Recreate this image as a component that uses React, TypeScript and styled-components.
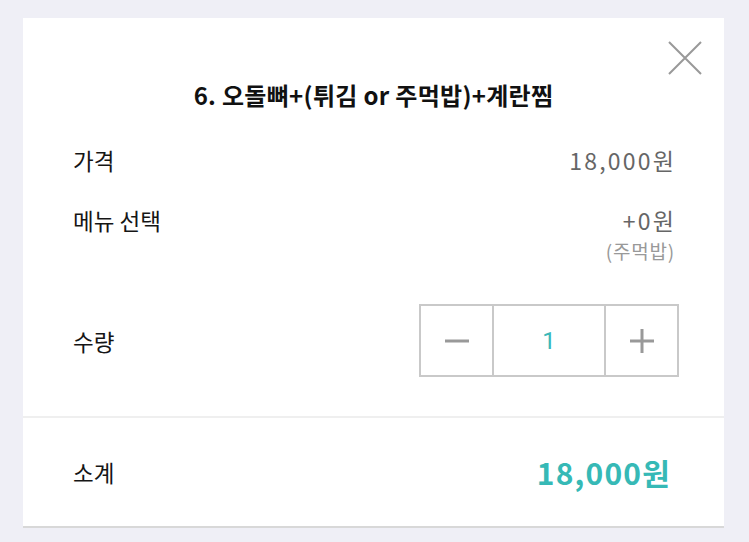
import React from "react";
import styled, { createGlobalStyle } from "styled-components";

const Global = createGlobalStyle`
  html, body { margin: 0; padding: 0; background: #efeff6; }
  body { font-family: "Noto Sans CJK KR", "Noto Sans", sans-serif; }
  * { box-sizing: border-box; }
`;

const Page = styled.div`
  width: 749px;
  height: 542px;
  padding: 18px 25px 0 23px;
  background: #efeff6;
`;

const Card = styled.div`
  position: relative;
  width: 701px;
  background: #fff;
  border-bottom: 2px solid #d8d8d8;
`;

const Close = styled.button`
  position: absolute;
  top: 23px;
  right: 22px;
  width: 34px;
  height: 34px;
  padding: 0;
  border: none;
  background: transparent;
  display: flex;
  align-items: center;
  justify-content: center;
`;

const Title = styled.h1`
  margin: 0;
  padding-top: 62px;
  height: 94px;
  line-height: 30px;
  text-align: center;
  font-size: 24px;
  font-weight: 700;
  color: #111;
  letter-spacing: 0.3px;
`;

const Body = styled.div`
  padding: 0 50px 39px;
  display: flex;
  flex-direction: column;
`;

const Row = styled.div<{ $mt: number; $center?: boolean }>`
  margin-top: ${(p) => p.$mt}px;
  display: flex;
  justify-content: space-between;
  align-items: ${(p) => (p.$center ? "center" : "flex-start")};
`;

const Label = styled.span`
  font-size: 22.5px;
  line-height: 36px;
  color: #151515;
`;

const ValueCol = styled.div`
  display: flex;
  flex-direction: column;
  align-items: flex-end;
`;

const Value = styled.span`
  font-size: 23px;
  line-height: 36px;
  color: #666;
  letter-spacing: 2.2px;
  margin-right: -2px;
`;

const Sub = styled.span`
  font-size: 19px;
  line-height: 26px;
  color: #999;
  letter-spacing: 0.8px;
  margin-right: -1px;
`;

const Stepper = styled.div`
  display: flex;
  height: 73px;
  margin-right: -5px;
  border: 2px solid #c9c9c9;
`;

const StepBtn = styled.button`
  width: 71px;
  height: 100%;
  padding: 0;
  border: none;
  background: #fff;
  display: flex;
  align-items: center;
  justify-content: center;
`;

const Count = styled.div`
  width: 114px;
  border-left: 2px solid #c9c9c9;
  border-right: 2px solid #c9c9c9;
  display: flex;
  align-items: center;
  justify-content: center;
  font-family: Roboto, "Noto Sans", sans-serif;
  font-size: 24px;
  color: #3bb8b8;
`;

const Footer = styled.div`
  height: 110px;
  border-top: 2px solid #efefef;
  padding: 0 54px 0 50px;
  display: flex;
  align-items: center;
  justify-content: space-between;
`;

const Total = styled.span`
  font-size: 30px;
  font-weight: 700;
  color: #36b9b6;
  letter-spacing: 1.2px;
  margin-right: -1px;
`;

export default function App() {
  return (
    <>
      <Global />
      <Page>
        <Card>
          <Close aria-label="닫기">
            <svg width="34" height="34" viewBox="0 0 34 34">
              <path d="M1 1 L33 33 M33 1 L1 33" stroke="#999" strokeWidth="2" fill="none" />
            </svg>
          </Close>
          <Title>6. 오돌뼈+(튀김 or 주먹밥)+계란찜</Title>
          <Body>
            <Row $mt={30}>
              <Label>가격</Label>
              <Value>18,000원</Value>
            </Row>
            <Row $mt={24}>
              <Label>메뉴 선택</Label>
              <ValueCol>
                <Value>+0원</Value>
                <Sub>(주먹밥)</Sub>
              </ValueCol>
            </Row>
            <Row $mt={40} $center>
              <Label>수량</Label>
              <Stepper>
                <StepBtn aria-label="빼기">
                  <svg width="24" height="24" viewBox="0 0 24 24">
                    <path d="M0 12 H24" stroke="#999" strokeWidth="3" />
                  </svg>
                </StepBtn>
                <Count>1</Count>
                <StepBtn aria-label="더하기">
                  <svg width="24" height="24" viewBox="0 0 24 24">
                    <path d="M0 12 H24 M12 0 V24" stroke="#999" strokeWidth="3" />
                  </svg>
                </StepBtn>
              </Stepper>
            </Row>
          </Body>
          <Footer>
            <Label>소계</Label>
            <Total>18,000원</Total>
          </Footer>
        </Card>
      </Page>
    </>
  );
}
